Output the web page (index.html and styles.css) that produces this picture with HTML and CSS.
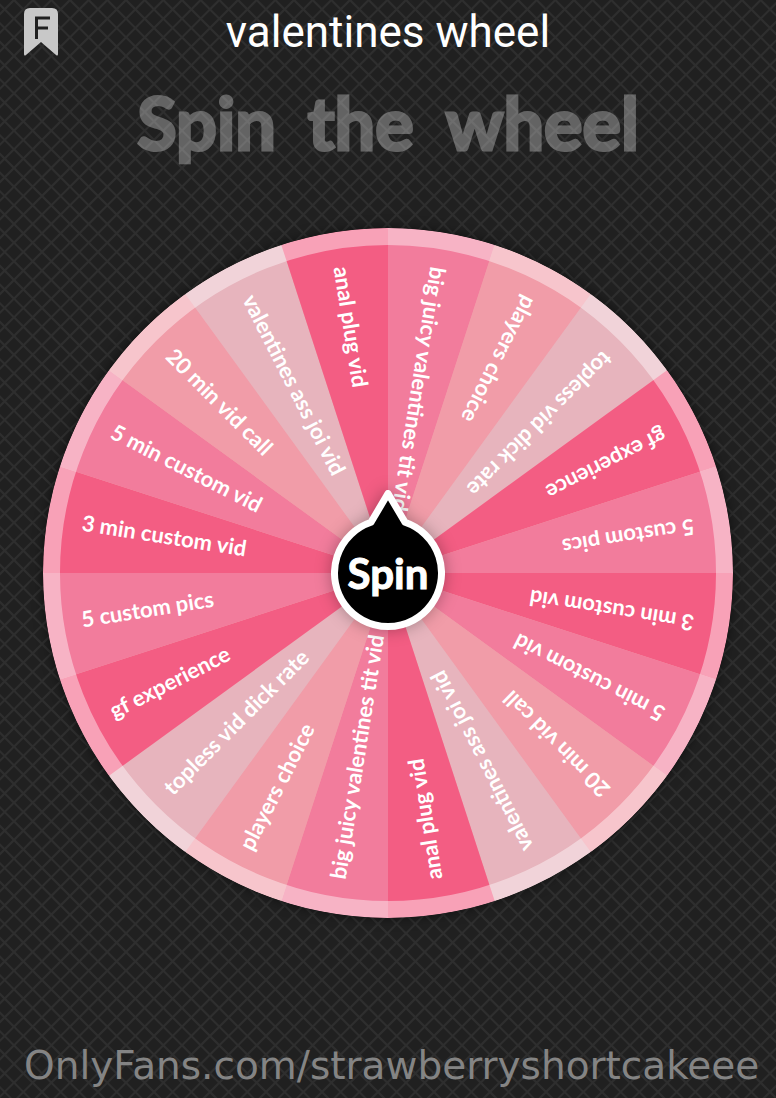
FILE: index.html
```html
<!DOCTYPE html>
<html lang="en">
<head>
<meta charset="utf-8">
<meta name="viewport" content="width=device-width, initial-scale=1">
<title>valentines wheel</title>
<link rel="stylesheet" href="styles.css">
</head>
<body>
<svg class="backdrop" aria-hidden="true">
  <defs>
    <pattern id="mesh" width="56" height="56" patternUnits="userSpaceOnUse" patternTransform="translate(14 0)">
      <g transform="scale(18.6667)">
        <path class="mesh-line" d="M-1 0L3 4M0 0L3 3M1 0L3 2M2 0L3 1M0 1L2 3M0 2L1 3M1 0L0 1M2 0L0 2M3 0L0 3M3 1L1 3M3 2L2 3"/>
      </g>
    </pattern>
  </defs>
  <rect width="100%" height="100%" fill="url(#mesh)"/>
</svg>
<header class="topbar">
  <svg class="bookmark" viewBox="0 0 34 48" role="img" aria-label="Bookmark F">
    <path class="bookmark-shape" d="M6 0H28Q34 0 34 6V46Q34 48.500 32 47L17 34 2 47Q0 48.500 0 46V6Q0 0 6 0Z"/>
    <path class="bookmark-letter" d="M12.500 31V10H26M12.500 20H24"/>
  </svg>
  <h1 class="title">valentines wheel</h1>
</header>
<main class="stage">
  <h2 class="prompt"><span>Spin</span> <span>the</span> <span>wheel</span></h2>
  <div class="wheel">
    <svg class="wheel-face" viewBox="-345 -345 690 690">
      <defs><path id="slice" d="M0 0V-345A345 345 0 0 1 106.600 -328.100Z"/></defs>
      <circle class="salmon" r="344"/>
      <g class="pink"><use href="#slice"/><text class="label" x="-310" y="6" transform="rotate(99)">big juicy valentines tit vid</text></g>
      <g class="salmon" transform="rotate(18)"><use href="#slice"/><text class="label" x="-310" y="6" transform="rotate(99)">players choice</text></g>
      <g class="blush" transform="rotate(36)"><use href="#slice"/><text class="label" x="-310" y="6" transform="rotate(99)">topless vid dick rate</text></g>
      <g class="rose" transform="rotate(54)"><use href="#slice"/><text class="label" x="-310" y="6" transform="rotate(99)">gf experience</text></g>
      <g class="pink" transform="rotate(72)"><use href="#slice"/><text class="label" x="-310" y="6" transform="rotate(99)">5 custom pics</text></g>
      <g class="rose" transform="rotate(90)"><use href="#slice"/><text class="label" x="-310" y="6" transform="rotate(99)">3 min custom vid</text></g>
      <g class="pink" transform="rotate(108)"><use href="#slice"/><text class="label" x="-310" y="6" transform="rotate(99)">5 min custom vid</text></g>
      <g class="salmon" transform="rotate(126)"><use href="#slice"/><text class="label" x="-310" y="6" transform="rotate(99)">20 min vid call</text></g>
      <g class="blush" transform="rotate(144)"><use href="#slice"/><text class="label" x="-310" y="6" transform="rotate(99)">valentines ass joi vid</text></g>
      <g class="rose" transform="rotate(162)"><use href="#slice"/><text class="label" x="-310" y="6" transform="rotate(99)">anal plug vid</text></g>
      <g class="pink" transform="rotate(180)"><use href="#slice"/><text class="label" x="-310" y="6" transform="rotate(99)">big juicy valentines tit vid</text></g>
      <g class="salmon" transform="rotate(198)"><use href="#slice"/><text class="label" x="-310" y="6" transform="rotate(99)">players choice</text></g>
      <g class="blush" transform="rotate(216)"><use href="#slice"/><text class="label" x="-310" y="6" transform="rotate(99)">topless vid dick rate</text></g>
      <g class="rose" transform="rotate(234)"><use href="#slice"/><text class="label" x="-310" y="6" transform="rotate(99)">gf experience</text></g>
      <g class="pink" transform="rotate(252)"><use href="#slice"/><text class="label" x="-310" y="6" transform="rotate(99)">5 custom pics</text></g>
      <g class="rose" transform="rotate(270)"><use href="#slice"/><text class="label" x="-310" y="6" transform="rotate(99)">3 min custom vid</text></g>
      <g class="pink" transform="rotate(288)"><use href="#slice"/><text class="label" x="-310" y="6" transform="rotate(99)">5 min custom vid</text></g>
      <g class="salmon" transform="rotate(306)"><use href="#slice"/><text class="label" x="-310" y="6" transform="rotate(99)">20 min vid call</text></g>
      <g class="blush" transform="rotate(324)"><use href="#slice"/><text class="label" x="-310" y="6" transform="rotate(99)">valentines ass joi vid</text></g>
      <g class="rose" transform="rotate(342)"><use href="#slice"/><text class="label" x="-310" y="6" transform="rotate(99)">anal plug vid</text></g>
      <circle class="rim" r="336.500"/>
    </svg>
    <button class="spin" type="button">
      <svg class="spin-shape" viewBox="-57 -57 114 114" aria-hidden="true">
        <path d="M0 -79.500L17 -50.700A53.500 53.500 0 1 1 -17 -50.700Z"/>
      </svg>
      <span class="spin-text">Spin</span>
    </button>
  </div>
</main>
<footer class="credit">OnlyFans.com/strawberryshortcakeee</footer>
</body>
</html>
```
FILE: styles.css
```css
* {
  box-sizing: border-box;
}

body {
  margin: 0;
  min-height: 100vh;
  display: flex;
  flex-direction: column;
  position: relative;
  background: #202020;
  color: #fff;
  font-family: Lato, "Open Sans", sans-serif;
}

.backdrop {
  position: absolute;
  inset: 0;
  width: 100%;
  height: 100%;
  z-index: -1;
}

.mesh-line {
  fill: none;
  stroke: #2e2e2e;
  stroke-width: 0.11;
}

.topbar {
  display: grid;
  grid-template-columns: 34px 1fr 34px;
  align-items: start;
  padding: 8px 24px 0;
}

.bookmark {
  width: 34px;
  height: 48px;
}

.bookmark-shape {
  fill: #c8c8c8;
}

.bookmark-letter {
  fill: none;
  stroke: #202020;
  stroke-width: 3;
}

.title {
  margin: 0;
  text-align: center;
  font-family: Roboto, sans-serif;
  font-size: 44px;
  line-height: 48px;
  font-weight: 400;
}

.stage {
  display: flex;
  flex-direction: column;
  align-items: center;
  gap: 64px;
  padding: 24px 43px 0;
}

.prompt {
  display: flex;
  flex-wrap: wrap;
  justify-content: center;
  column-gap: 32px;
  margin: 0;
  font-size: 72px;
  line-height: 84px;
  font-weight: 700;
  -webkit-text-stroke: 3px #fff;
  stroke-linejoin: round;
  opacity: 0.3;
}

.wheel {
  display: grid;
  place-items: center;
  width: 100%;
  max-width: 690px;
}

.wheel > * {
  grid-area: 1 / 1;
}

.wheel-face {
  display: block;
  width: 100%;
  border-radius: 50%;
  box-shadow: 0 0 12px rgba(0, 0, 0, 0.5);
}

.pink {
  fill: #f27c9c;
}

.salmon {
  fill: #f19ca8;
}

.blush {
  fill: #e7b4bd;
}

.rose {
  fill: #f35d83;
}

.label {
  fill: #fff;
  font-size: 22px;
  font-weight: 700;
}

.rim {
  fill: none;
  stroke: #fff;
  stroke-width: 17;
  stroke-opacity: 0.42;
}

.spin {
  display: grid;
  place-items: center;
  width: 114px;
  height: 114px;
  padding: 0;
  border: 0;
  border-radius: 50%;
  background: none;
  color: #fff;
  font: inherit;
  cursor: pointer;
}

.spin > * {
  grid-area: 1 / 1;
}

.spin-shape {
  width: 100%;
  height: 100%;
  overflow: visible;
  fill: #000;
  stroke: #fff;
  stroke-width: 7;
  stroke-linejoin: round;
  filter: drop-shadow(0 0 8px rgba(0, 0, 0, 0.3));
}

.spin-text {
  z-index: 1;
  font-size: 42px;
  line-height: 48px;
  font-weight: 700;
  -webkit-text-stroke: 1px #fff;
}

.credit {
  margin-top: auto;
  padding: 0 0 8px 24px;
  color: #848484;
  font-family: "DejaVu Sans", sans-serif;
  font-size: 39px;
  line-height: 48px;
  overflow-wrap: anywhere;
}
```
